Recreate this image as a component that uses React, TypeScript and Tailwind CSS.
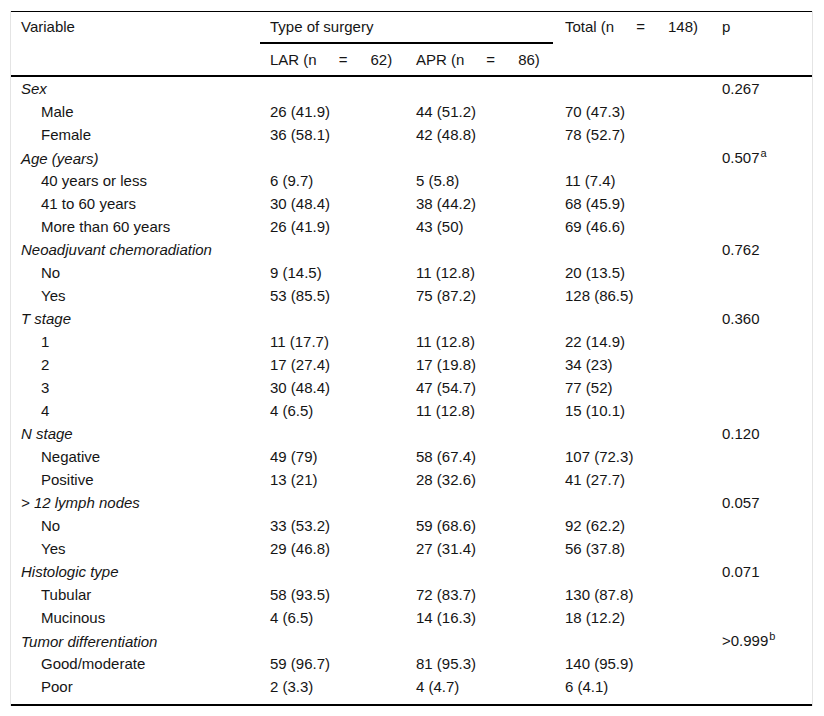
import React from "react";

type Row = { label: string; group?: boolean; lar?: string; apr?: string; total?: string; p?: string; sup?: string };

const rows: Row[] = [
  { label: "Sex", group: true, p: "0.267" },
  { label: "Male", lar: "26 (41.9)", apr: "44 (51.2)", total: "70 (47.3)" },
  { label: "Female", lar: "36 (58.1)", apr: "42 (48.8)", total: "78 (52.7)" },
  { label: "Age (years)", group: true, p: "0.507", sup: "a" },
  { label: "40 years or less", lar: "6 (9.7)", apr: "5 (5.8)", total: "11 (7.4)" },
  { label: "41 to 60 years", lar: "30 (48.4)", apr: "38 (44.2)", total: "68 (45.9)" },
  { label: "More than 60 years", lar: "26 (41.9)", apr: "43 (50)", total: "69 (46.6)" },
  { label: "Neoadjuvant chemoradiation", group: true, p: "0.762" },
  { label: "No", lar: "9 (14.5)", apr: "11 (12.8)", total: "20 (13.5)" },
  { label: "Yes", lar: "53 (85.5)", apr: "75 (87.2)", total: "128 (86.5)" },
  { label: "T stage", group: true, p: "0.360" },
  { label: "1", lar: "11 (17.7)", apr: "11 (12.8)", total: "22 (14.9)" },
  { label: "2", lar: "17 (27.4)", apr: "17 (19.8)", total: "34 (23)" },
  { label: "3", lar: "30 (48.4)", apr: "47 (54.7)", total: "77 (52)" },
  { label: "4", lar: "4 (6.5)", apr: "11 (12.8)", total: "15 (10.1)" },
  { label: "N stage", group: true, p: "0.120" },
  { label: "Negative", lar: "49 (79)", apr: "58 (67.4)", total: "107 (72.3)" },
  { label: "Positive", lar: "13 (21)", apr: "28 (32.6)", total: "41 (27.7)" },
  { label: "> 12 lymph nodes", group: true, p: "0.057" },
  { label: "No", lar: "33 (53.2)", apr: "59 (68.6)", total: "92 (62.2)" },
  { label: "Yes", lar: "29 (46.8)", apr: "27 (31.4)", total: "56 (37.8)" },
  { label: "Histologic type", group: true, p: "0.071" },
  { label: "Tubular", lar: "58 (93.5)", apr: "72 (83.7)", total: "130 (87.8)" },
  { label: "Mucinous", lar: "4 (6.5)", apr: "14 (16.3)", total: "18 (12.2)" },
  { label: "Tumor differentiation", group: true, p: ">0.999", sup: "b" },
  { label: "Good/moderate", lar: "59 (96.7)", apr: "81 (95.3)", total: "140 (95.9)" },
  { label: "Poor", lar: "2 (3.3)", apr: "4 (4.7)", total: "6 (4.1)" },
];

const cols = "grid grid-cols-[249px_146px_149px_157px_100px]";

function N({ pre, n }: { pre: string; n: string }) {
  return (
    <>
      {pre} (n<span className="inline-block w-[22px]" />=<span className="inline-block w-[23px]" />
      {n})
    </>
  );
}

export default function App() {
  return (
    <div
      className="bg-white w-[824px] h-[716px] pt-[11px] pl-[10px] text-[15px] text-[#151515]"
      style={{ fontFamily: '"Liberation Sans", Arial, sans-serif' }}
    >
      <div className="w-[803px] border-x border-[#e4e4e4]">
        <div className="border-t border-black border-b-2 border-b-black leading-[20px]">
          <div className={cols}>
            <div className="row-span-2 pl-[10px] pt-[5px]">Variable</div>
            <div className="col-span-2 pl-[10px] pt-[5px] h-[32px] border-b-2 border-black mr-[2px]">Type of surgery</div>
            <div className="row-span-2 pl-[10px] pt-[5px] whitespace-nowrap">
              <N pre="Total" n="148" />
            </div>
            <div className="row-span-2 pl-[10px] pt-[5px]">p</div>
            <div className="pl-[10px] pt-[6px] h-[31px] whitespace-nowrap">
              <N pre="LAR" n="62" />
            </div>
            <div className="pl-[10px] pt-[6px] h-[31px] whitespace-nowrap">
              <N pre="APR" n="86" />
            </div>
          </div>
        </div>
        <div className="pb-[6px] border-b-2 border-black">
          {rows.map((r, i) => (
            <div key={i} className={`${cols} h-[23px] items-center leading-[23px]`}>
              <div className={r.group ? "pl-[10px] italic" : "pl-[30px]"}>{r.label}</div>
              <div className="pl-[10px]">{r.lar}</div>
              <div className="pl-[10px]">{r.apr}</div>
              <div className="pl-[10px]">{r.total}</div>
              <div className="pl-[10px] whitespace-nowrap">
                {r.p}
                {r.sup && <span className="text-[11px] relative top-[-6px] ml-[1px]">{r.sup}</span>}
              </div>
            </div>
          ))}
        </div>
      </div>
    </div>
  );
}
